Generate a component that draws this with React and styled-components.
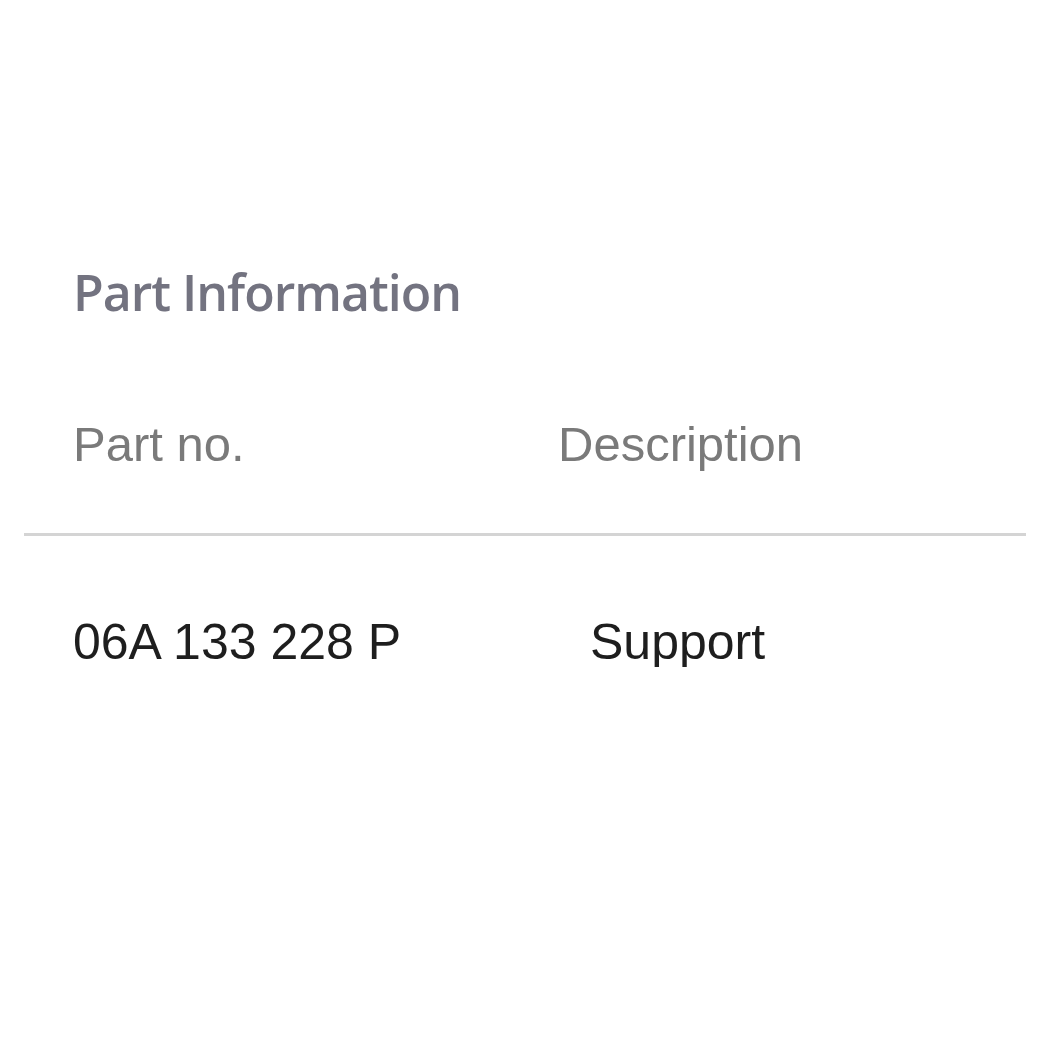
import React from "react";
import styled, { createGlobalStyle } from "styled-components";

const Global = createGlobalStyle`
  body {
    margin: 0;
    background: #fff;
    font-family: "Liberation Sans", Arial, sans-serif;
  }
`;

const Panel = styled.div`
  padding: 267px 24px 0;
`;

const Title = styled.h2`
  margin: 0 0 103px;
  padding-left: 49px;
  font-family: "Open Sans", "Liberation Sans", sans-serif;
  font-size: 50px;
  line-height: 50px;
  font-weight: 600;
  letter-spacing: -1px;
  color: #737380;
`;

const Row = styled.div`
  display: grid;
  grid-template-columns: 485px 1fr;
  padding-left: 49px;
  border-bottom: ${(p) => (p.head ? "3px solid #d4d4d4" : "none")};
  padding-bottom: ${(p) => (p.head ? "64px" : "0")};
  padding-top: ${(p) => (p.head ? "0" : "81px")};
`;

const Cell = styled.div`
  font-size: ${(p) => (p.head ? "49px" : "50px")};
  line-height: ${(p) => (p.head ? "49px" : "50px")};
  color: ${(p) => (p.head ? "#7a7a7a" : "#1e1e1e")};
  padding-left: ${(p) => (p.indent ? "32px" : "0")};
`;

export default function App() {
  return (
    <>
      <Global />
      <Panel>
        <Title>Part Information</Title>
        <Row head>
          <Cell head>Part no.</Cell>
          <Cell head>Description</Cell>
        </Row>
        <Row>
          <Cell>06A 133 228 P</Cell>
          <Cell indent>Support</Cell>
        </Row>
      </Panel>
    </>
  );
}
